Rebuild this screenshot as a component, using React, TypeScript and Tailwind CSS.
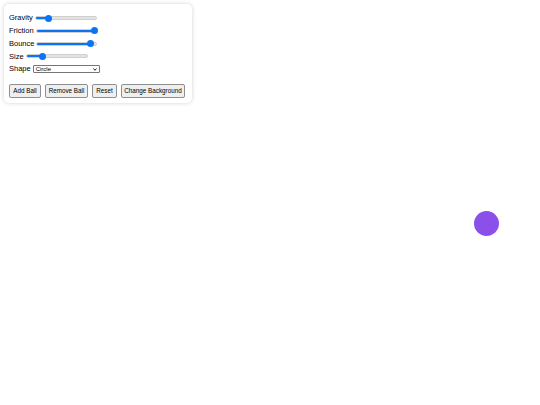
import React from "react";

type SliderProps = { width: number; value: number };

function Slider({ width, value }: SliderProps) {
  const pos = Math.round(width * value);
  return (
    <div className="relative h-[8px] flex items-center" style={{ width }}>
      <div className="w-full h-[4px] rounded-full bg-[#e3e3e3] border border-[#cfcfcf] overflow-hidden">
        <div className="h-full bg-[#0b74f0]" style={{ width: pos }} />
      </div>
      <div
        className="absolute top-[0.5px] w-[7px] h-[7px] rounded-full bg-[#0b74f0]"
        style={{ left: pos - 3.5 }}
      />
    </div>
  );
}

const rows = [
  { label: "Gravity", width: 62, value: 0.23 },
  { label: "Friction", width: 61, value: 0.97 },
  { label: "Bounce", width: 61, value: 0.89 },
  { label: "Size", width: 62, value: 0.28 },
];

const buttons = [
  { label: "Add Ball", w: "w-[32px]" },
  { label: "Remove Ball", w: "w-[43px]" },
  { label: "Reset", w: "w-[25px]" },
  { label: "Change Background", w: "w-[64px]" },
];

export default function App() {
  return (
    <div className="relative w-[540px] h-[405px] bg-white overflow-hidden font-['Liberation_Sans',Arial,sans-serif] text-black">
      {/* Control panel */}
      <div className="absolute left-[4px] top-[4px] w-[188px] h-[99px] rounded-[5px] bg-white shadow-[0_0_4px_rgba(0,0,0,0.18)] pl-[5px] pt-[9px]">
        {rows.map((r) => (
          <div key={r.label} className="flex items-center gap-[2px] h-[10px] mb-[2.75px] text-[7.5px] leading-none">
            <span>{r.label}</span>
            <Slider width={r.width} value={r.value} />
          </div>
        ))}
        <div className="flex items-center gap-[2px] h-[10px] text-[7.5px] leading-none">
          <span>Shape</span>
          <div className="relative w-[67px] h-[8px] border border-[#767676] rounded-[1px] bg-white flex items-center pl-[2px] text-[6px]">
            Circle
            <svg className="absolute right-[1.5px] top-[2px]" width="4" height="3" viewBox="0 0 8 6">
              <path d="M1 1 L4 4.5 L7 1" fill="none" stroke="#000" strokeWidth="1.8" />
            </svg>
          </div>
        </div>
        <div className="flex gap-[4px] mt-[10px]">
          {buttons.map((b) => (
            <div
              key={b.label}
              className={`${b.w} h-[14px] flex items-center justify-center border border-[#8f8f8f] rounded-[2px] bg-[#efefef] text-[6.3px] leading-none whitespace-nowrap`}
            >
              {b.label}
            </div>
          ))}
        </div>
      </div>

      {/* Ball */}
      <div className="absolute left-[473.5px] top-[210.5px] w-[25px] h-[25px] rounded-full bg-[#8b4fea]" />
    </div>
  );
}
